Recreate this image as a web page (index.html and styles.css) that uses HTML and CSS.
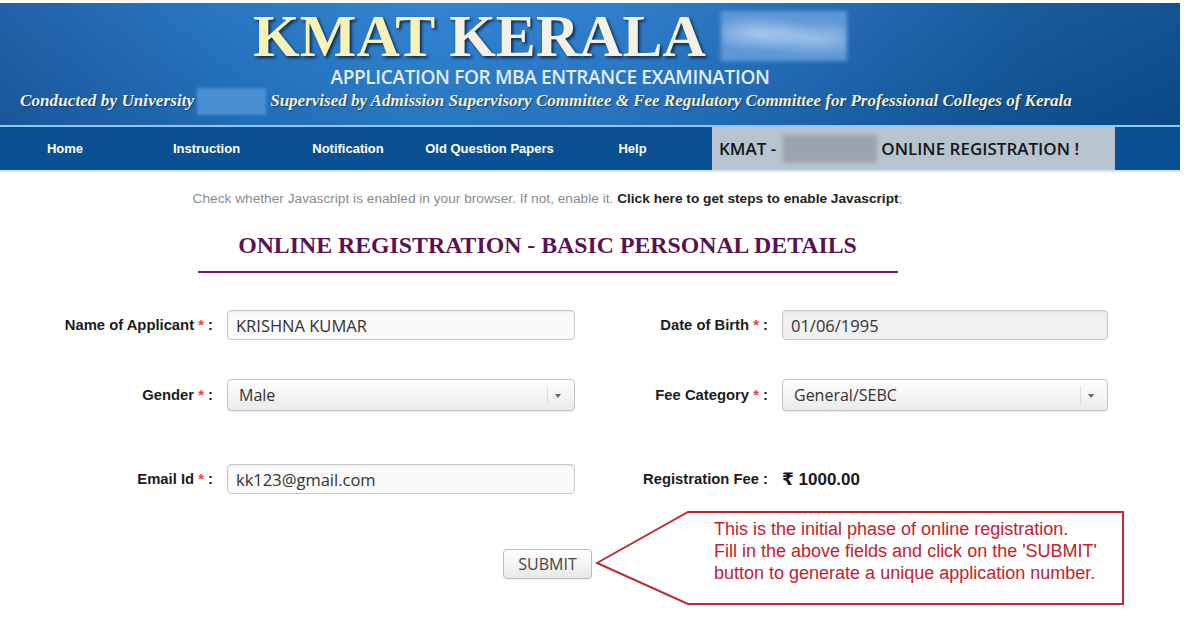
FILE: index.html
```html
<!DOCTYPE html>
<html lang="en">
<head>
<meta charset="utf-8">
<title>KMAT Kerala - Online Registration</title>
<link rel="stylesheet" href="styles.css">
</head>
<body>
<div class="page">
  <header class="banner">
    <div class="banner-inner">
      <div class="title-row">
        <h1 class="title"><span class="title-a">KMAT</span> <span class="title-b">KERALA</span></h1>
        <span class="blur blur-year"></span>
      </div>
      <div class="subtitle">APPLICATION FOR MBA ENTRANCE EXAMINATION</div>
      <div class="byline">
        <span class="conducted">Conducted by University</span>
        <span class="blur blur-univ"></span>
        <span class="supervised">Supervised by Admission Supervisory Committee &amp; Fee Regulatory Committee for Professional Colleges of Kerala</span>
      </div>
    </div>
  </header>

  <nav class="nav">
    <div class="nav-links">
      <a class="nav-item" href="#">Home</a>
      <a class="nav-item" href="#">Instruction</a>
      <a class="nav-item" href="#">Notification</a>
      <a class="nav-item" href="#">Old Question Papers</a>
      <a class="nav-item" href="#">Help</a>
    </div>
    <div class="nav-banner">
      <span>KMAT -</span>
      <span class="blur blur-nav"></span>
      <span>ONLINE REGISTRATION !</span>
    </div>
  </nav>

  <main class="content">
    <p class="js-note">Check whether Javascript is enabled in your browser. If not, enable it. <b>Click here to get steps to enable Javascript</b>;</p>
    <h2 class="form-title">ONLINE REGISTRATION - BASIC PERSONAL DETAILS</h2>
    <div class="form-rule"></div>

    <form class="form" onsubmit="return false">
      <div class="form-row row-1">
        <label class="label">Name of Applicant <span class="req">*</span> :</label>
        <input class="field" type="text" value="KRISHNA KUMAR">
        <label class="label">Date of Birth <span class="req">*</span> :</label>
        <input class="field field-readonly" type="text" value="01/06/1995" readonly>
      </div>
      <div class="form-row row-2">
        <label class="label">Gender <span class="req">*</span> :</label>
        <div class="select"><select><option>Male</option><option>Female</option></select></div>
        <label class="label">Fee Category <span class="req">*</span> :</label>
        <div class="select"><select><option>General/SEBC</option><option>SC/ST</option></select></div>
      </div>
      <div class="form-row row-3">
        <label class="label">Email Id <span class="req">*</span> :</label>
        <input class="field" type="text" value="kk123@gmail.com">
        <span class="label">Registration Fee :</span>
        <span class="fee">₹ 1000.00</span>
      </div>

      <div class="submit-row">
        <button class="submit" type="submit">SUBMIT</button>
        <div class="callout">
          <svg class="callout-shape" width="532" height="98" viewBox="0 0 532 98">
            <polygon points="2,54 93,3 528,3 528,95 93,95" fill="none" stroke="#bf2b33" stroke-width="2" stroke-linejoin="miter"/>
          </svg>
          <div class="callout-text">This is the initial phase of online registration.<br>Fill in the above fields and click on the 'SUBMIT'<br>button to generate a unique application number.</div>
        </div>
      </div>
    </form>
  </main>
</div>
</body>
</html>
```

FILE: styles.css
```css
html, body {
  margin: 0;
  padding: 0;
  background: #ffffff;
}

body {
  font-family: "Liberation Sans", Arial, sans-serif;
  color: #222;
}

.page {
  width: 1180px;
  padding-top: 3px;
}

/* ---------- Banner ---------- */
.banner {
  box-sizing: border-box;
  height: 124px;
  padding-top: 4px;
  border-bottom: 2px solid #8fc7ee;
  background:
    linear-gradient(180deg, rgba(255,255,255,0.04) 0%, rgba(0,0,0,0.06) 100%),
    linear-gradient(90deg, #1a5ba4 0%, #2170be 18%, #2a7fcf 36%, #2879ca 52%, #1c67b2 70%, #0f5497 88%, #0b4d8e 100%);
}

.banner-inner {
  width: 1100px;
}

.title-row {
  display: flex;
  justify-content: center;
  align-items: center;
  height: 58px;
}

.title {
  margin: 0;
  font: bold 60px/56px "Liberation Serif", "Times New Roman", serif;
  text-shadow: 2px 2px 3px rgba(8, 28, 60, 0.85);
  white-space: nowrap;
}

.title-a { color: #f7f2b5; }
.title-b { color: #f3f2e4; }

.blur {
  display: inline-block;
  flex: none;
}

.blur-year {
  width: 126px;
  height: 50px;
  margin-left: 15px;
  background:
    radial-gradient(ellipse at 30% 45%, rgba(230,240,255,0.55), rgba(230,240,255,0) 45%),
    radial-gradient(ellipse at 75% 55%, rgba(230,240,255,0.45), rgba(230,240,255,0) 45%),
    #5f98d6;
  filter: blur(2px);
}

.subtitle {
  margin-top: 2px;
  text-align: center;
  font: 600 19px/20px "Open Sans", sans-serif;
  letter-spacing: -0.35px;
  color: #e2ecfa;
  white-space: nowrap;
}

.byline {
  display: flex;
  align-items: center;
  height: 24px;
  margin-top: 2px;
  padding-left: 20px;
  font: italic bold 17px/24px "Liberation Serif", "Times New Roman", serif;
  text-shadow: 1px 1px 1px rgba(10, 30, 60, 0.6);
  white-space: nowrap;
}

.conducted {
  color: #f3f4f6;
  letter-spacing: 0.1px;
}

.blur-univ {
  width: 69px;
  height: 27px;
  margin-left: 3px;
  background: #4a8fd4;
  filter: blur(1.5px);
}

.supervised {
  margin-left: 4px;
  color: #f2eed6;
}

/* ---------- Nav ---------- */
.nav {
  display: flex;
  height: 43px;
  background: #0b4f93;
  border-bottom: 2px solid #cfe7f7;
}

.nav-links {
  display: grid;
  grid-template-columns: 130px 153px 130px 153px 133px;
}

.nav-item {
  display: flex;
  align-items: center;
  justify-content: center;
  color: #ffffff;
  font: bold 13px "Liberation Sans", Arial, sans-serif;
  text-decoration: none;
}

.nav-banner {
  display: flex;
  align-items: center;
  box-sizing: border-box;
  width: 403px;
  margin-left: 13px;
  padding-left: 7px;
  background: #b8c4d0;
  color: #151515;
  font: 600 17px "Open Sans", sans-serif;
  white-space: nowrap;
}

.blur-nav {
  width: 94px;
  height: 28px;
  margin: 0 4px 0 7px;
  background: #9ba4ae;
  filter: blur(2px);
}

/* ---------- Content ---------- */
.content {
  width: 1095px;
  padding-bottom: 44px;
}

.js-note {
  margin: 19px 0 0;
  text-align: center;
  font-size: 13.7px;
  line-height: 16px;
  color: #8c8c8c;
  white-space: nowrap;
}

.js-note b {
  color: #222;
}

.form-title {
  margin: 24px 0 0;
  text-align: center;
  font: bold 23.8px/28px "Liberation Serif", "Times New Roman", serif;
  color: #5a1250;
}

.form-rule {
  width: 700px;
  height: 2px;
  margin: 12px auto 0;
  background: #6b1d5e;
}

.form-row {
  display: grid;
  grid-template-columns: 213px 348px 179px 326px;
  column-gap: 14px;
  align-items: center;
}

.row-1 { margin-top: 37px; height: 30px; }
.row-2 { margin-top: 39px; height: 32px; }
.row-3 { margin-top: 53px; height: 30px; }

.label {
  text-align: right;
  font: bold 14.8px "Liberation Sans", Arial, sans-serif;
  color: #1c1c1c;
  white-space: nowrap;
}

.req {
  color: #e04848;
}

.field {
  box-sizing: border-box;
  width: 100%;
  height: 30px;
  margin: 0;
  padding: 0 8px;
  border: 1px solid #c8c8c8;
  border-radius: 4px;
  background: #fafafa;
  box-shadow: inset 0 1px 2px rgba(0, 0, 0, 0.08);
  font: 16.5px "Open Sans", sans-serif;
  color: #333;
  outline: none;
}

.field-readonly {
  background: #f1f1f1;
}

.select {
  position: relative;
  box-sizing: border-box;
  height: 32px;
  border: 1px solid #c3c3c3;
  border-radius: 4px;
  background: linear-gradient(#fefefe, #ebebeb);
  box-shadow: 0 1px 1px rgba(0, 0, 0, 0.08);
}

.select select {
  -webkit-appearance: none;
  appearance: none;
  box-sizing: border-box;
  width: 100%;
  height: 100%;
  margin: 0;
  padding: 0 30px 0 11px;
  border: 0;
  background: transparent;
  font: 16px "Open Sans", sans-serif;
  color: #333;
  outline: none;
}

.select::before {
  content: "";
  position: absolute;
  top: 6px;
  bottom: 6px;
  right: 26px;
  width: 1px;
  background: #dcdcdc;
}

.select::after {
  content: "";
  position: absolute;
  top: 14px;
  right: 13px;
  border-left: 3px solid transparent;
  border-right: 3px solid transparent;
  border-top: 4px solid #666;
  pointer-events: none;
}

.fee {
  font: bold 17px "Liberation Sans", Arial, "DejaVu Sans", sans-serif;
  color: #1a1a1a;
}

/* ---------- Submit + callout ---------- */
.submit-row {
  position: relative;
  display: flex;
  justify-content: center;
  height: 30px;
  margin-top: 55px;
}

.submit {
  width: 89px;
  height: 30px;
  padding: 0;
  border: 1px solid #bdbdbd;
  border-radius: 4px;
  background: linear-gradient(#ffffff, #e8e8e8);
  box-shadow: 0 1px 1px rgba(0, 0, 0, 0.08);
  font: 16px "Open Sans", sans-serif;
  color: #444;
}

.callout {
  position: absolute;
  left: 595px;
  top: -40px;
  width: 532px;
  height: 98px;
}

.callout-shape {
  position: absolute;
  left: 0;
  top: 0;
}

.callout-text {
  position: absolute;
  left: 119px;
  top: 9px;
  font: 18px/22px "Liberation Sans", Arial, sans-serif;
  color: #c4212d;
  white-space: nowrap;
}
```
